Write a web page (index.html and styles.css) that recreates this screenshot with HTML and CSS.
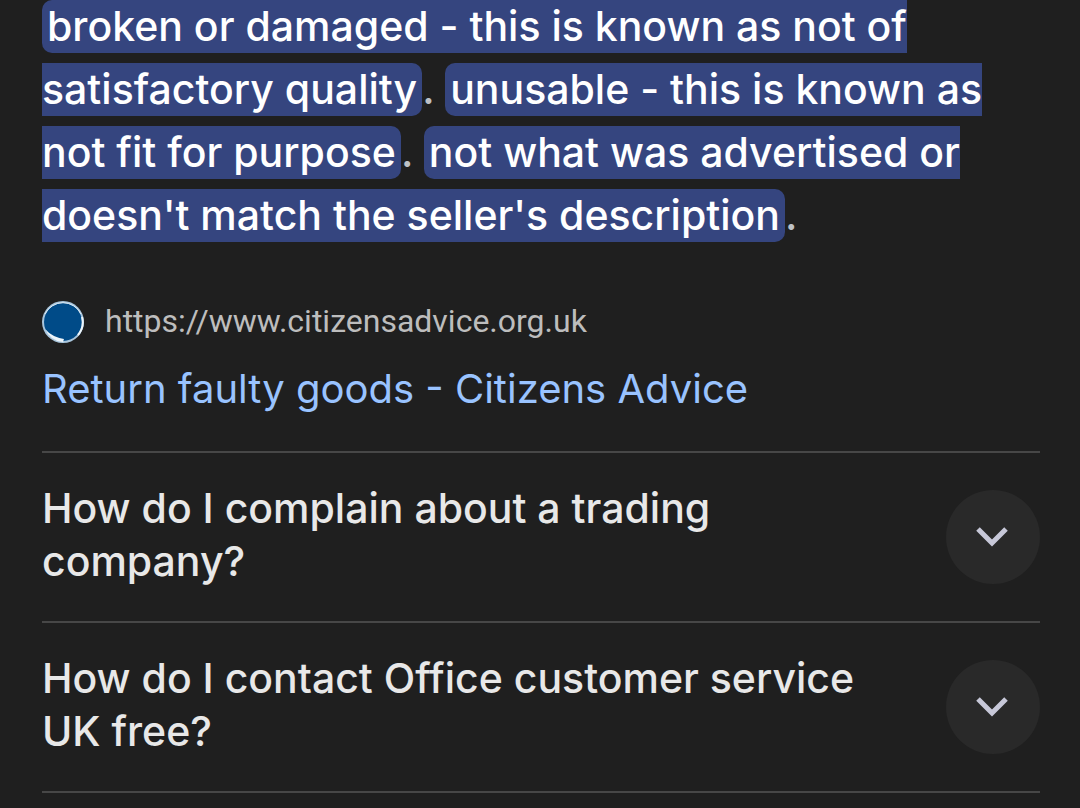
FILE: index.html
```
<!DOCTYPE html>
<html lang="en">
<head>
    <meta charset="UTF-8">
    <meta name="viewport" content="width=device-width, initial-scale=1.0">
    <title>People also ask</title>
    <link rel="stylesheet" href="styles.css">
</head>
<body>
    <main class="results">
        <!-- Expanded answer -->
        <section class="answer">
            <p class="answer-text">
                <mark>broken or damaged - this is known as not of<br>satisfactory quality</mark>. <mark>unusable - this is known as<br>not fit for purpose</mark>. <mark>not what was advertised or<br>doesn't match the seller's description</mark>.
            </p>
            <div class="source">
                <svg class="favicon" viewBox="0 0 42 42" aria-hidden="true">
                    <circle cx="21" cy="21" r="21" fill="#a9c6dd"/>
                    <circle cx="21" cy="21" r="19" fill="#004b88"/>
                    <path d="M3 28 Q8 40 21 41 L22 38 Q10 36 3 28 Z" fill="#eef6fb"/>
                    <path d="M3 13 A20 20 0 0 1 39 13" fill="none" stroke="#dcebf5" stroke-width="1"/>
                    <path d="M40 16 A20 20 0 0 1 36 34" fill="none" stroke="#eef6fb" stroke-width="2"/>
                </svg>
                <span class="source-url">https://www.citizensadvice.org.uk</span>
            </div>
            <a class="source-title" href="https://www.citizensadvice.org.uk">Return faulty goods - Citizens Advice</a>
        </section>

        <!-- Collapsed questions -->
        <section class="question">
            <h2>How do I complain about a trading company?</h2>
            <button class="expand" type="button" aria-label="Expand answer">
                <svg class="chevron" viewBox="0 0 32 20" aria-hidden="true">
                    <path d="M1 2 L15 16 L29 2" fill="none" stroke="#c7c8d8" stroke-width="5"/>
                </svg>
            </button>
        </section>
        <section class="question">
            <h2>How do I contact Office customer service UK free?</h2>
            <button class="expand" type="button" aria-label="Expand answer">
                <svg class="chevron" viewBox="0 0 32 20" aria-hidden="true">
                    <path d="M1 2 L15 16 L29 2" fill="none" stroke="#c7c8d8" stroke-width="5"/>
                </svg>
            </button>
        </section>
    </main>
</body>
</html>
```
FILE: styles.css
```
body {
    margin: 0;
    background-color: #1f1f1f;
    color: #e8e8e8;
    font-family: Inter, Roboto, sans-serif;
}
.results {
    display: flow-root;
    padding: 0 40px 0 42px;
}
.answer {
    margin-top: -5px;
    padding-bottom: 36px;
}
.answer-text {
    margin: 0 0 54px;
    color: #bdc1c6;
    font-size: 41px;
    font-weight: 500;
    line-height: 63px;
    white-space: nowrap;
}
mark {
    padding: 1px 5px 2px;
    background-color: #35457f;
    color: #fff;
    border-radius: 10px;
}
.source {
    display: flex;
    align-items: center;
    gap: 21px;
    margin-bottom: 19px;
}
.favicon {
    width: 42px;
    height: 42px;
}
.source-url {
    padding-bottom: 2px;
    color: #bdbdbd;
    font-family: Roboto, sans-serif;
    font-size: 32px;
    line-height: 40px;
}
.source-title {
    display: block;
    color: #99c3ff;
    font-size: 40px;
    line-height: 53px;
    text-decoration: none;
}
.question {
    display: flex;
    align-items: center;
    justify-content: space-between;
    padding: 29px 0;
    border-top: 2px solid #474747;
}
.question:last-child {
    border-bottom: 2px solid #474747;
}
.question h2 {
    max-width: 840px;
    margin: 0;
    padding-bottom: 4px;
    font-size: 41px;
    font-weight: 500;
    line-height: 53px;
}
.expand {
    display: flex;
    flex: none;
    align-items: center;
    justify-content: center;
    width: 94px;
    height: 94px;
    padding: 0;
    border: none;
    border-radius: 50%;
    background-color: #292929;
    cursor: pointer;
}
.chevron {
    overflow: visible;
    width: 32px;
    height: 20px;
}
```
